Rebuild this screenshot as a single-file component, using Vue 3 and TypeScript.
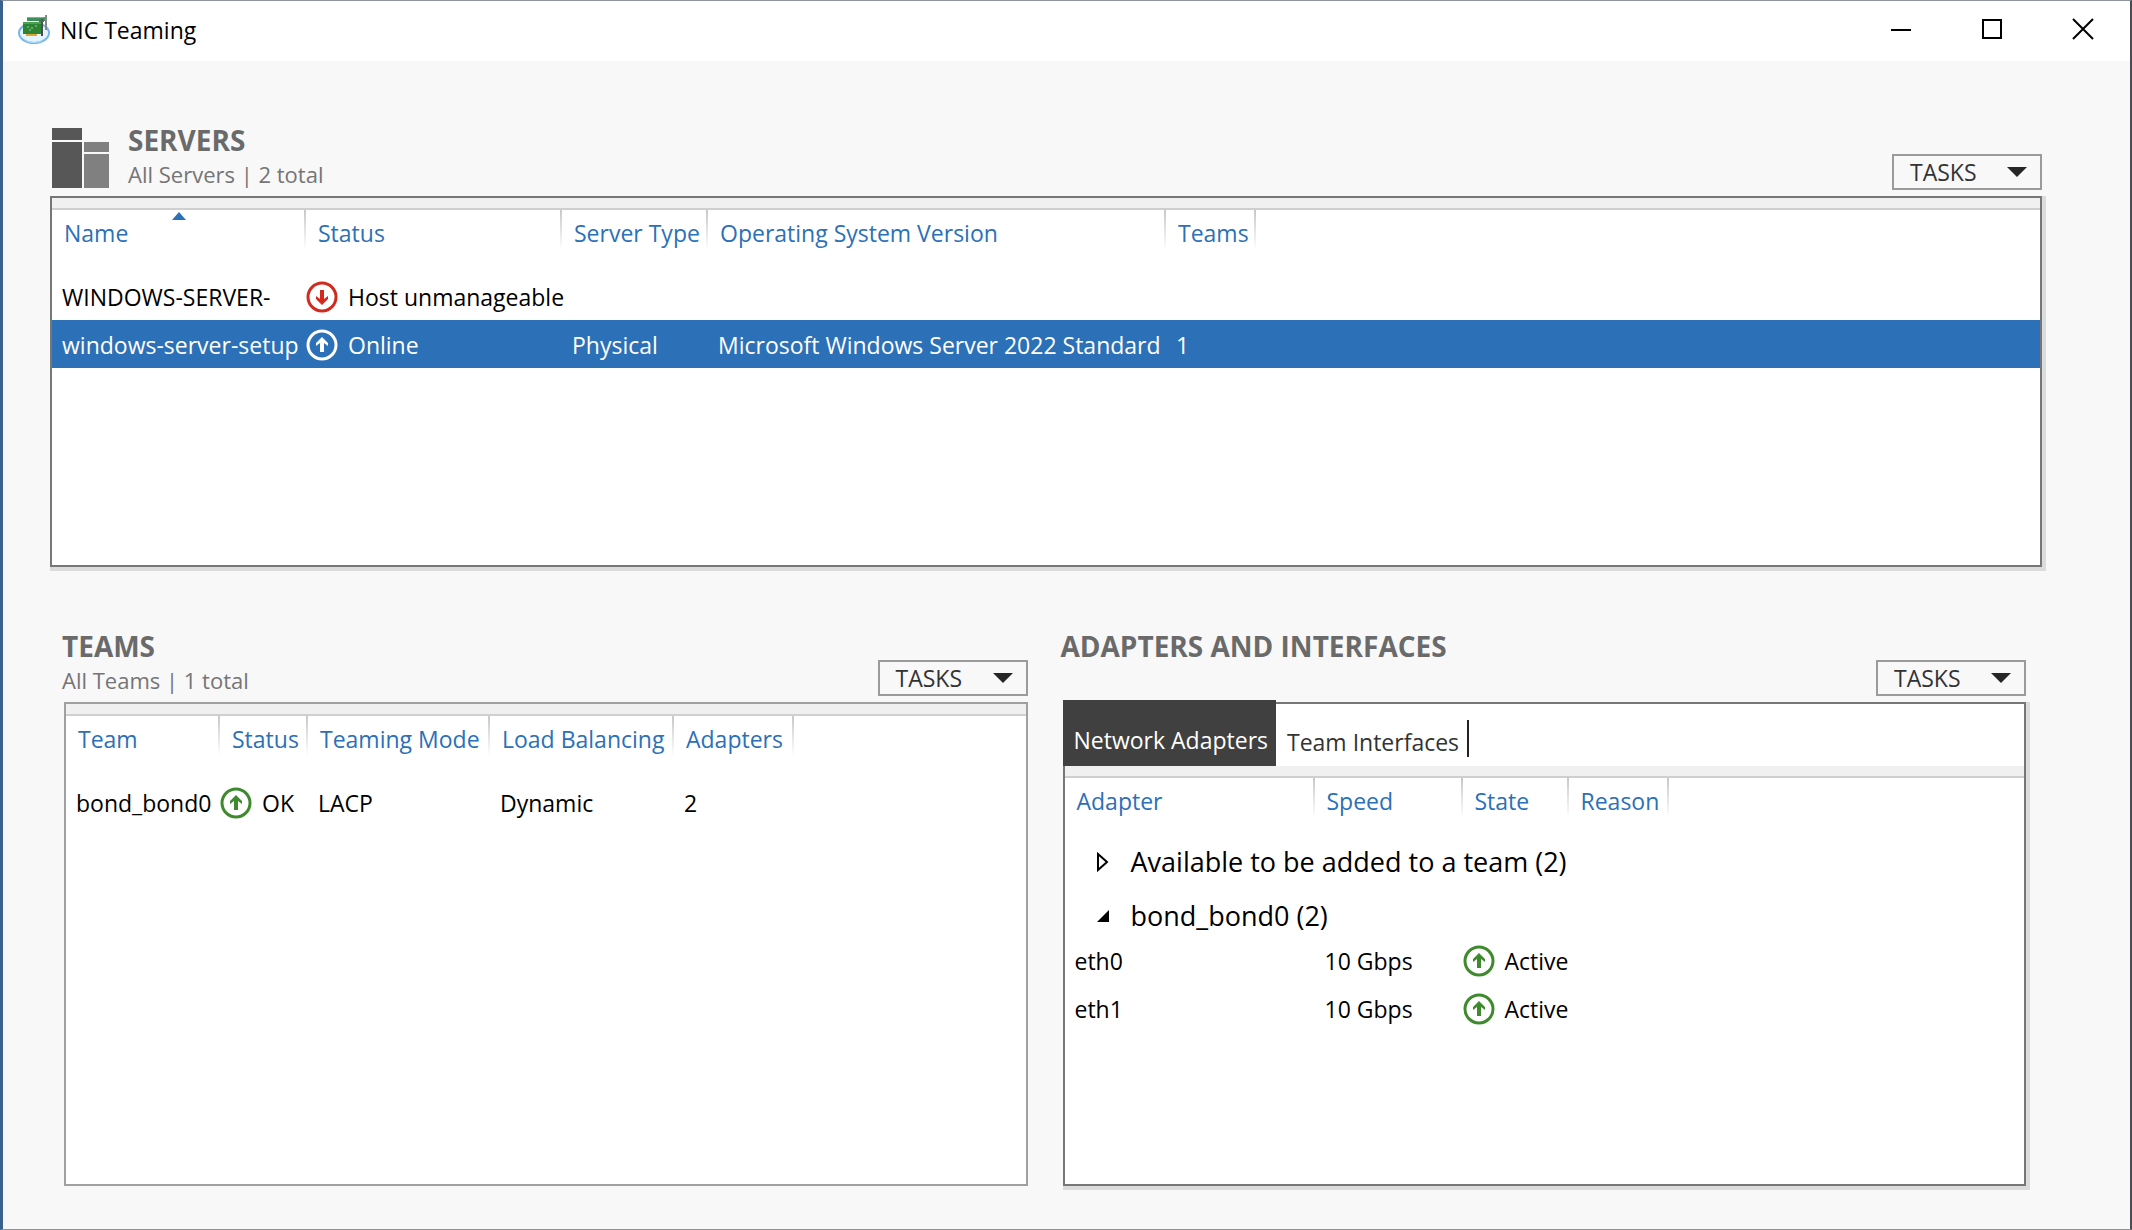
<script setup lang="ts">
import { ref } from 'vue'

type Health = 'up' | 'down'

interface Column {
  label: string
  width: number
  sorted?: boolean
}

interface Server {
  name: string
  health: Health
  status: string
  type: string
  os: string
  teams: string
}

const serverColumns: Column[] = [
  { label: 'Name', width: 254, sorted: true },
  { label: 'Status', width: 256 },
  { label: 'Server Type', width: 146 },
  { label: 'Operating System Version', width: 458 },
  { label: 'Teams', width: 90 },
]

const servers: Server[] = [
  { name: 'WINDOWS-SERVER-', health: 'down', status: 'Host unmanageable', type: '', os: '', teams: '' },
  {
    name: 'windows-server-setup',
    health: 'up',
    status: 'Online',
    type: 'Physical',
    os: 'Microsoft Windows Server 2022 Standard',
    teams: '1',
  },
]

const teamColumns: Column[] = [
  { label: 'Team', width: 154 },
  { label: 'Status', width: 88 },
  { label: 'Teaming Mode', width: 182 },
  { label: 'Load Balancing', width: 184 },
  { label: 'Adapters', width: 120 },
]

const teams = [{ name: 'bond_bond0', status: 'OK', mode: 'LACP', balancing: 'Dynamic', adapters: 2 }]

const adapterColumns: Column[] = [
  { label: 'Adapter', width: 250 },
  { label: 'Speed', width: 148 },
  { label: 'State', width: 106 },
  { label: 'Reason', width: 100 },
]

const adapters = [
  { name: 'eth0', speed: '10 Gbps', state: 'Active' },
  { name: 'eth1', speed: '10 Gbps', state: 'Active' },
]

const tabs = ['Network Adapters', 'Team Interfaces']
const activeTab = ref(0)
const selectedServer = ref(1)
</script>

<template>
  <div class="window">
    <header class="titlebar">
      <svg class="app-icon" viewBox="0 0 34 32" aria-hidden="true">
        <ellipse cx="16" cy="19" rx="15" ry="10" fill="#e4f4fd" stroke="#78b5ee" stroke-width="2" />
        <path d="M5 24 Q16 32 27 24 Q24 29 16 29 Q8 29 5 24Z" fill="#a9dcfa" />
        <path d="M9 3h18v4H9z" fill="#3f8f5c" />
        <path d="M9 3h18v1H9z" fill="#7db592" />
        <path d="M5 8h18v12H5z" fill="#2c8434" />
        <path d="M5 8h18v2H5z" fill="#4ba152" />
        <path d="M9 13h2M13 14h2M17 12h2M11 16h2" stroke="#8fd08c" stroke-width="1" />
        <path d="M8 20h11v2H8z" fill="#e2a531" />
        <path d="M23 5h2v17h-2z" fill="#4c4c4c" />
        <path d="M21 6h5v2h-5z" fill="#5d6266" />
        <path d="M27 1h2v15h-2z" fill="#83888c" />
        <path d="M25 3h3v1h-3z" fill="#83888c" />
      </svg>
      <h1>NIC Teaming</h1>
      <div class="caption-buttons">
        <button type="button" aria-label="Minimize">
          <svg viewBox="0 0 22 22"><path d="M1 12h20" /></svg>
        </button>
        <button type="button" aria-label="Maximize">
          <svg viewBox="0 0 22 22"><path d="M2 2h18v18H2z" /></svg>
        </button>
        <button type="button" aria-label="Close">
          <svg viewBox="0 0 22 22"><path d="M1 1l20 20M21 1L1 21" /></svg>
        </button>
      </div>
    </header>

    <main>
      <section class="servers">
        <div class="section-head">
          <svg class="servers-icon" viewBox="0 0 57 60" aria-hidden="true">
            <path d="M0 0h30v12H0zM0 14h30v46H0z" fill="#575757" />
            <path d="M32 14h25v10H32zM32 26h25v34H32z" fill="#808080" />
          </svg>
          <div class="heading">
            <h2>SERVERS</h2>
            <p>All Servers | 2 total</p>
          </div>
          <button type="button" class="tasks">
            TASKS
            <svg viewBox="0 0 20 10" aria-hidden="true"><path d="M0 0h20L10 10z" /></svg>
          </button>
        </div>
        <div class="panel raised">
          <div class="strip"></div>
          <table>
            <colgroup>
              <col v-for="c in serverColumns" :key="c.label" :style="{ width: c.width + 'px' }" />
              <col />
            </colgroup>
            <thead>
              <tr>
                <th v-for="c in serverColumns" :key="c.label" scope="col">
                  <svg v-if="c.sorted" class="sort" viewBox="0 0 14 8" aria-hidden="true"><path d="M7 0l7 8H0z" /></svg>
                  {{ c.label }}
                </th>
                <td></td>
              </tr>
            </thead>
            <tbody>
              <tr
                v-for="(s, i) in servers"
                :key="s.name"
                :class="{ selected: i === selectedServer }"
                @click="selectedServer = i"
              >
                <td>{{ s.name }}</td>
                <td class="state">
                  <span>
                    <svg class="badge" :class="s.health" viewBox="0 0 32 32" aria-hidden="true">
                      <circle cx="16" cy="16" r="14" />
                      <path v-if="s.health === 'up'" d="M16 8l6 6v3l-4-3v9h-4v-9l-4 3v-3z" />
                      <path v-else d="M16 24l6-6v-3l-4 3V9h-4v9l-4-3v3z" />
                    </svg>
                    {{ s.status }}
                  </span>
                </td>
                <td>{{ s.type }}</td>
                <td>{{ s.os }}</td>
                <td>{{ s.teams }}</td>
                <td></td>
              </tr>
            </tbody>
          </table>
        </div>
      </section>

      <div class="lower">
        <section>
          <div class="section-head">
            <div class="heading">
              <h2>TEAMS</h2>
              <p>All Teams | 1 total</p>
            </div>
            <button type="button" class="tasks">
              TASKS
              <svg viewBox="0 0 20 10" aria-hidden="true"><path d="M0 0h20L10 10z" /></svg>
            </button>
          </div>
          <div class="panel">
            <div class="strip"></div>
            <table>
              <colgroup>
                <col v-for="c in teamColumns" :key="c.label" :style="{ width: c.width + 'px' }" />
                <col />
              </colgroup>
              <thead>
                <tr>
                  <th v-for="c in teamColumns" :key="c.label" scope="col">{{ c.label }}</th>
                  <td></td>
                </tr>
              </thead>
              <tbody>
                <tr v-for="t in teams" :key="t.name">
                  <td>{{ t.name }}</td>
                  <td class="state">
                    <span>
                      <svg class="badge up" viewBox="0 0 32 32" aria-hidden="true">
                        <circle cx="16" cy="16" r="14" />
                        <path d="M16 8l6 6v3l-4-3v9h-4v-9l-4 3v-3z" />
                      </svg>
                      {{ t.status }}
                    </span>
                  </td>
                  <td>{{ t.mode }}</td>
                  <td>{{ t.balancing }}</td>
                  <td>{{ t.adapters }}</td>
                  <td></td>
                </tr>
              </tbody>
            </table>
          </div>
        </section>

        <section>
          <div class="section-head">
            <div class="heading">
              <h2>ADAPTERS AND INTERFACES</h2>
            </div>
            <button type="button" class="tasks">
              TASKS
              <svg viewBox="0 0 20 10" aria-hidden="true"><path d="M0 0h20L10 10z" /></svg>
            </button>
          </div>
          <div class="panel raised">
            <div class="tabs" role="tablist">
              <button
                v-for="(t, i) in tabs"
                :key="t"
                type="button"
                role="tab"
                :aria-selected="i === activeTab"
                :class="{ active: i === activeTab }"
                @click="activeTab = i"
              >
                {{ t }}
              </button>
              <i class="divider"></i>
            </div>
            <div class="strip"></div>
            <table class="grouped">
              <colgroup>
                <col v-for="c in adapterColumns" :key="c.label" :style="{ width: c.width + 'px' }" />
                <col />
              </colgroup>
              <thead>
                <tr>
                  <th v-for="c in adapterColumns" :key="c.label" scope="col">{{ c.label }}</th>
                  <td></td>
                </tr>
              </thead>
              <tbody>
                <tr class="group">
                  <td colspan="5">
                    <button type="button" aria-expanded="false">
                      <svg viewBox="0 0 12 20" aria-hidden="true">
                        <path d="M1 2v16l9-8z" fill="none" stroke="#000" stroke-width="2" />
                      </svg>
                      Available to be added to a team (2)
                    </button>
                  </td>
                </tr>
                <tr class="group">
                  <td colspan="5">
                    <button type="button" aria-expanded="true">
                      <svg viewBox="0 0 12 20" aria-hidden="true"><path d="M12 4v12H0z" /></svg>
                      bond_bond0 (2)
                    </button>
                  </td>
                </tr>
                <tr v-for="a in adapters" :key="a.name">
                  <td>{{ a.name }}</td>
                  <td>{{ a.speed }}</td>
                  <td class="state">
                    <span>
                      <svg class="badge up" viewBox="0 0 32 32" aria-hidden="true">
                        <circle cx="16" cy="16" r="14" />
                        <path d="M16 8l6 6v3l-4-3v9h-4v-9l-4 3v-3z" />
                      </svg>
                      {{ a.state }}
                    </span>
                  </td>
                  <td></td>
                  <td></td>
                </tr>
              </tbody>
            </table>
          </div>
        </section>
      </div>
    </main>
  </div>
</template>

<style>
body {
  margin: 0;
}
</style>

<style scoped>
.window {
  box-sizing: border-box;
  min-height: 100vh;
  display: flex;
  flex-direction: column;
  border: 1px solid #8f949b;
  border-left: 3px solid #3a628f;
  border-right: 2px solid #4a4d50;
  background: #f8f8f8;
  color: #000;
  font-family: 'Open Sans', 'Noto Sans', sans-serif;
  font-size: 23px;
  line-height: 32px;
}

h1,
h2,
p {
  margin: 0;
}

button {
  margin: 0;
  padding: 0;
  border: 0;
  background: none;
  font: inherit;
  color: inherit;
}

.titlebar {
  box-sizing: border-box;
  display: flex;
  align-items: center;
  height: 60px;
  padding: 0 2px 2px 15px;
  background: #fff;
}

.app-icon {
  width: 34px;
  height: 32px;
  margin-right: 8px;
}

h1 {
  font-size: 23px;
  font-weight: 400;
}

.caption-buttons {
  display: flex;
  margin-left: auto;
}

.caption-buttons button {
  display: grid;
  place-items: center;
  width: 91px;
  height: 56px;
}

.caption-buttons svg {
  width: 22px;
  height: 22px;
  margin-bottom: 2px;
  fill: none;
  stroke: #000;
  stroke-width: 2;
}

main {
  flex: 1;
  display: flex;
  flex-direction: column;
  padding-bottom: 43px;
}

section {
  display: flex;
  flex-direction: column;
  min-width: 0;
}

.servers {
  height: 506px;
  padding: 0 88px 0 47px;
}

.section-head {
  box-sizing: border-box;
  display: flex;
  align-items: flex-end;
  height: 135px;
  padding-bottom: 6px;
}

.servers-icon {
  width: 57px;
  height: 60px;
  margin: 0 19px 2px 2px;
}

.heading {
  height: 68px;
  font-size: 22px;
  color: #757575;
}

h2 {
  font-size: 28px;
  line-height: 36px;
  font-weight: 700;
  color: #6a6a6a;
}

.tasks {
  box-sizing: border-box;
  display: flex;
  align-items: center;
  justify-content: space-between;
  width: 150px;
  height: 36px;
  margin-left: auto;
  padding: 0 13px 0 16px;
  border: 2px solid #9b9b9b;
  color: #333;
}

.tasks svg {
  width: 20px;
  height: 10px;
  fill: #262626;
}

.panel {
  box-sizing: border-box;
  flex: 1;
  border: 2px solid #a0a0a0;
  background: #fff;
}

.panel.raised {
  border-color: #777;
  box-shadow: 2px 2px 0 2px #dcdcdc;
}

.strip {
  height: 10px;
  border-bottom: 2px solid #cfcfcf;
  background: #f0f0f0;
}

.lower {
  flex: 1;
  display: grid;
  grid-template-columns: 1fr 1fr;
  column-gap: 35px;
  padding: 0 104px 0 61px;
}

.lower .heading {
  margin-left: -2px;
}

table {
  width: 100%;
  border-collapse: collapse;
  table-layout: fixed;
}

th,
td {
  padding: 0;
  text-align: left;
  white-space: nowrap;
  font-weight: 400;
}

th {
  position: relative;
  height: 55px;
  padding: 7px 0 0 12px;
  vertical-align: top;
  color: #2c70b7;
  background: linear-gradient(#c8c8c8, #fff) right top / 2px 40px no-repeat;
}

.grouped th {
  height: 43px;
}

.sort {
  position: absolute;
  top: 2px;
  left: 50%;
  width: 14px;
  height: 8px;
  margin-left: -7px;
  fill: #2c70b7;
}

tbody td {
  height: 46px;
  padding: 2px 0 0 10px;
}

td.state {
  padding-left: 0;
}

td.state span {
  display: flex;
  align-items: center;
  gap: 10px;
}

.badge {
  flex: none;
  width: 32px;
  height: 32px;
}

.badge circle {
  fill: none;
  stroke: currentColor;
  stroke-width: 3;
}

.badge path {
  fill: currentColor;
}

.badge.up {
  color: #3f8a2e;
}

.badge.down {
  color: #d12b1f;
}

.selected {
  background: #2c70b7;
  color: #fff;
}

.selected .badge {
  color: #fff;
}

.tabs {
  display: flex;
  height: 62px;
}

.tabs button {
  padding: 14px 8px 0 11px;
  color: #333;
}

.tabs .active {
  margin: -4px 0 0 -2px;
  background: #404040;
  color: #fff;
}

.divider {
  width: 2px;
  height: 37px;
  margin-top: 16px;
  background: #222;
}

.group td {
  height: 54px;
  padding: 0 0 0 32px;
}

.group button {
  display: flex;
  align-items: center;
  gap: 22px;
  padding-top: 14px;
  font-size: 27px;
  line-height: 40px;
}

.group svg {
  width: 12px;
  height: 20px;
}
</style>
